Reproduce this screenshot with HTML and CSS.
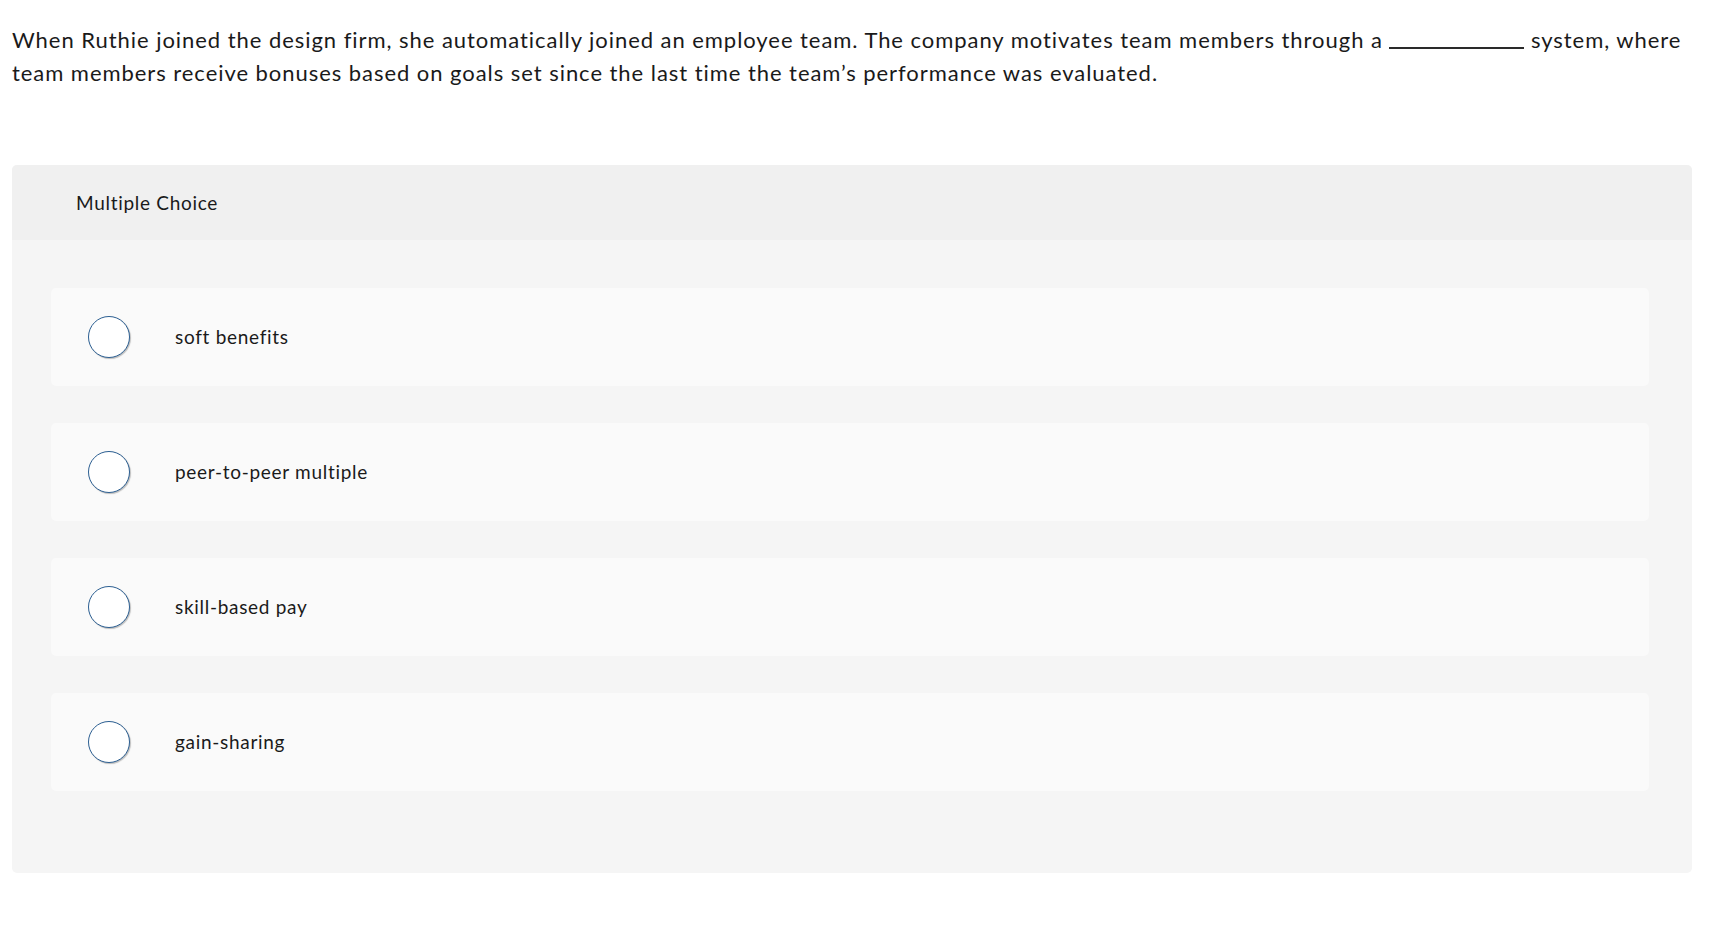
FILE: index.html
```html
<!DOCTYPE html>
<html lang="en">
<head>
<meta charset="utf-8">
<title>Multiple Choice</title>
<link rel="stylesheet" href="styles.css">
</head>
<body>
<div class="page">
  <p class="question">When Ruthie joined the design firm, she automatically joined an employee team. The company motivates team members through a <span class="blank"></span> system, where team members receive bonuses based on goals set since the last time the team’s performance was evaluated.</p>
  <section class="panel">
    <header class="panel-head">Multiple Choice</header>
    <div class="panel-body">
      <label class="option"><span class="radio"></span><span class="option-text">soft benefits</span></label>
      <label class="option"><span class="radio"></span><span class="option-text">peer-to-peer multiple</span></label>
      <label class="option"><span class="radio"></span><span class="option-text">skill-based pay</span></label>
      <label class="option"><span class="radio"></span><span class="option-text">gain-sharing</span></label>
    </div>
  </section>
</div>
</body>
</html>
```
FILE: styles.css
```css
html, body {
  margin: 0;
  padding: 0;
  background: #ffffff;
}
body {
  font-family: Lato, "Open Sans", "Liberation Sans", sans-serif;
  color: #1a1a1a;
}
.page {
  padding: 24px 34px 0 12px;
}
.question {
  margin: 0;
  font-size: 22px;
  line-height: 32.5px;
  letter-spacing: 0.95px;
  color: #1a1a1a;
}
.blank {
  display: inline-block;
  width: 135px;
  height: 1px;
  border-bottom: 2px solid #2a2a2a;
  vertical-align: -1px;
}
.panel {
  margin-top: 76px;
  border-radius: 5px;
  background: #f5f5f5;
  overflow: hidden;
}
.panel-head {
  height: 75px;
  display: flex;
  align-items: center;
  padding-left: 64px;
  background: #f0f0f0;
  font-size: 19px;
  letter-spacing: 0.7px;
  color: #1a1a1a;
}
.panel-body {
  display: flex;
  flex-direction: column;
  gap: 37px;
  padding: 48px 43px 82px 39px;
}
.option {
  height: 98px;
  display: flex;
  align-items: center;
  padding-left: 37px;
  background: #fafafa;
  border-radius: 5px;
  cursor: pointer;
}
.radio {
  flex: none;
  width: 40px;
  height: 40px;
  border: 1.5px solid #2c5f92;
  border-radius: 50%;
  background: #ffffff;
  box-shadow: 1px 1px 1px rgba(0, 0, 0, 0.25);
}
.option-text {
  margin-left: 45px;
  margin-top: -2px;
  font-size: 19px;
  letter-spacing: 0.7px;
  color: #1a1a1a;
}
```
